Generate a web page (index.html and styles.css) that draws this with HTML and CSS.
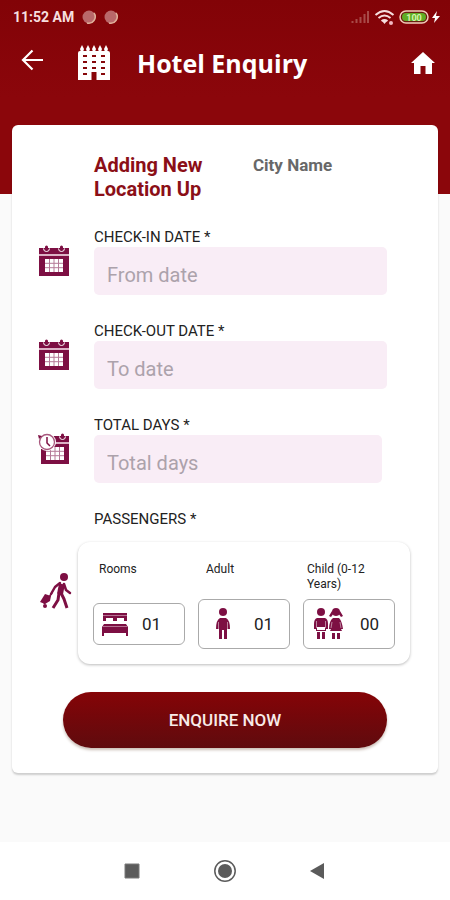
FILE: index.html
```html
<!DOCTYPE html>
<html lang="en">
<head>
<meta charset="utf-8">
<meta name="viewport" content="width=device-width, initial-scale=1">
<title>Hotel Enquiry</title>
<link rel="stylesheet" href="styles.css">
</head>
<body>
<svg class="sprite" aria-hidden="true">
  <symbol id="calendar" viewBox="0 0 32 32">
    <path fill="#7d0f43" d="M1 3h30v6H1zM1 11h30v20H1z"/>
    <path fill="#dcb3c6" d="M1 9h30v2H1z"/>
    <path fill="none" stroke="#fff" stroke-width="1" d="M5.500 3.500a3 3 0 0 0 6 0M20.500 3.500a3 3 0 0 0 6 0"/>
    <path fill="#7d0f43" d="M7 2a1.500 1.500 0 0 1 3 0v2a1.500 1.500 0 0 1-3 0zM22 2a1.500 1.500 0 0 1 3 0v2a1.500 1.500 0 0 1-3 0z"/>
    <path fill="#fff" d="M7 14h18v13H7z"/>
    <path fill="none" stroke="#b57a98" stroke-width="1" d="M11.500 14v13M16 14v13M20.500 14v13M7 18.300h18M7 22.700h18"/>
  </symbol>
</svg>

<header class="header">
  <div class="status">
    <span class="time">11:52 AM</span>
    <svg class="dots" viewBox="0 0 38 16" aria-hidden="true">
      <circle cx="8" cy="8" r="6.500" fill="#b9686a"/><path d="M13 4a6.500 6.500 0 0 1-7 10" fill="none" stroke="#e0b09a" stroke-width="1.500"/>
      <circle cx="30" cy="8" r="6.500" fill="#b9686a"/><path d="M35 4a6.500 6.500 0 0 1-7 10" fill="none" stroke="#e0b09a" stroke-width="1.500"/>
    </svg>
    <svg class="signals" viewBox="0 0 92 18" aria-hidden="true">
      <path stroke="#a84a48" stroke-width="2" d="M2.500 15v-2M6.500 15v-4M10.500 15V9M14.500 15V6M18 15V3"/>
      <g fill="none" stroke="#f6dede" stroke-width="2"><path d="M25.500 7q9-8 18 0M28.500 10q6-5 12 0M31.500 13q3-2 6 0"/></g>
      <path fill="#f6dede" d="m32 13 2.500 3 2.500-3z"/><circle cx="41" cy="15" r="2" fill="#f2b9c2"/>
      <rect x="50" y="3" width="28" height="12" rx="6" fill="#6a1e10" stroke="#f3cdbb" stroke-width="1.500"/>
      <rect x="52" y="5" width="24" height="8" rx="4" fill="#5fae25"/>
      <text x="64" y="12.500" text-anchor="middle" class="charge">100</text>
      <path fill="#fff" d="m87 3-5 7h3l-1 5 6-7h-4z"/>
    </svg>
  </div>
  <div class="appbar">
    <button class="icon-button back" type="button" aria-label="Back">
      <svg viewBox="0 0 24 24"><path fill="none" stroke="#fff" stroke-width="2.200" d="M23 12H3M12.500 2.500 3 12l9.500 9.500"/></svg>
    </button>
    <svg class="hotel" viewBox="0 0 34 36" aria-hidden="true">
      <path fill="#fff" d="M1 8q0-2 2-2h28q2 0 2 2v27H19.500v-8h-5v8H1z"/>
      <path fill="#fff" d="m5 0 2 4-1 3H4L3 4zM11 0l2 4-1 3h-2L9 4zM17 0l2 4-1 3h-2l-1-3zM23 0l2 4-1 3h-2l-1-3zM29 0l2 4-1 3h-2l-1-3z"/>
      <path fill="#87070a" d="M6 10h4v2H6zM15 10h4v2h-4zM24 10h4v2h-4zM6 16h4v2H6zM15 16h4v2h-4zM24 16h4v2h-4zM6 22h4v2H6zM15 22h4v2h-4zM24 22h4v2h-4zM6 28h4v2H6zM24 28h4v2h-4z"/>
    </svg>
    <h1 class="title">Hotel Enquiry</h1>
    <a class="home" href="#" aria-label="Home">
      <svg viewBox="0 0 24 22"><path fill="#fff" d="M12 0 24 11h-3v11h-6.500v-8h-5v8H3V11H0z"/></svg>
    </a>
  </div>
</header>

<main class="main">
  <form class="card">
    <div class="places">
      <h2 class="location">Adding New Location Up</h2>
      <span class="city">City Name</span>
    </div>

    <div class="row">
      <svg class="row-icon" aria-hidden="true"><use href="#calendar"/></svg>
      <div class="field">
        <label for="checkin">CHECK-IN DATE *</label>
        <input id="checkin" type="text" placeholder="From date">
      </div>
    </div>

    <div class="row">
      <svg class="row-icon" aria-hidden="true"><use href="#calendar"/></svg>
      <div class="field">
        <label for="checkout">CHECK-OUT DATE *</label>
        <input id="checkout" type="text" placeholder="To date">
      </div>
    </div>

    <div class="row">
      <svg class="row-icon" viewBox="0 0 32 32" aria-hidden="true">
        <path fill="#7d0f43" d="M3 3h28v6H3zM3 11h28v20H3z"/>
        <path fill="#dcb3c6" d="M3 9h28v2H3z"/>
        <path fill="none" stroke="#fff" d="M21.500 3.500a3 3 0 0 0 6 0"/>
        <path fill="#7d0f43" d="M23 2a1.500 1.500 0 0 1 3 0v2a1.500 1.500 0 0 1-3 0z"/>
        <path fill="#fff" d="M8 14h18v13H8z"/>
        <path fill="none" stroke="#b57a98" d="M12.500 14v13M17 14v13M21.500 14v13M8 18.300h18M8 22.700h18"/>
        <circle cx="9" cy="9" r="9" fill="#fff"/>
        <circle cx="9" cy="9" r="7.500" fill="#fff" stroke="#a8577d" stroke-width="1.300"/>
        <path fill="none" stroke="#7d0f43" stroke-width="1.500" d="M9 4v6l3 3"/>
        <path fill="#7d0f43" d="M0 2l4 1-3 3z"/>
      </svg>
      <div class="field field-days">
        <label for="days">TOTAL DAYS *</label>
        <input id="days" type="text" placeholder="Total days">
      </div>
    </div>

    <div class="row">
      <svg class="walker" viewBox="0 0 32 36" aria-hidden="true">
        <circle cx="24" cy="4" r="4" fill="#7d0f43"/>
        <g fill="none" stroke="#7d0f43" stroke-linejoin="round">
          <path stroke-width="6" d="m22 11-2 10"/>
          <path stroke-width="2.500" stroke-linecap="round" d="m20 10-5 4-4 7M24 11l2 6 4 3"/>
          <path stroke-width="3" d="m19 20-1 7-5 8M21 20l3 6 3 9"/>
          <path stroke-width="1.500" d="M12 20 4 31"/>
        </g>
        <path fill="#7d0f43" d="m5 21 6 2-1 5-5 3-5-2z"/>
        <circle cx="5" cy="33" r="2" fill="#7d0f43"/>
      </svg>
      <div class="field">
        <span class="group-label" id="passengers">PASSENGERS *</span>
        <div class="passengers" role="group" aria-labelledby="passengers">
          <div class="counter">
            <label for="rooms">Rooms</label>
            <div class="count-box count-rooms">
              <svg class="bed" viewBox="0 0 26 24" aria-hidden="true">
                <path fill="#7d0f43" d="M1 1h24v8h-3V6h-7v3h-4V6H4v3H1zM2 12h22l2 3v9h-2v-3H2v3H0v-9z"/>
                <path fill="none" stroke="#c48aa7" stroke-width=".8" d="M1 14.500h24M1 3.500h24"/>
              </svg>
              <input id="rooms" type="text" inputmode="numeric" value="01">
            </div>
          </div>
          <div class="counter">
            <label for="adults">Adult</label>
            <div class="count-box">
              <svg class="adult" viewBox="0 0 14 32" aria-hidden="true">
                <g fill="#7d0f43"><circle cx="7" cy="4" r="4"/><path d="M4 10h6q4 2 4 11h-3v10H8v-9H6v9H3V21H0Q0 12 4 10z"/></g>
                <path stroke="#fff" stroke-width=".5" d="M2.500 14v7M11.500 14v7"/>
              </svg>
              <input id="adults" type="text" inputmode="numeric" value="01">
            </div>
          </div>
          <div class="counter">
            <label for="children">Child (0-12 Years)</label>
            <div class="count-box">
              <svg class="kids" viewBox="0 0 30 32" aria-hidden="true">
                <g fill="#7d0f43"><circle cx="7" cy="4" r="4"/><path d="M3 10h8q3 1 3 6v5h-2v2H2v-2H0v-5q0-5 3-6zM3 24h3v7H3zM8 24h3v7H8z"/><circle cx="22" cy="4" r="4"/><path d="m18 3-3 5 2 1 3-4zM26 3l3 5-2 1-3-4zM19 10h6q3 3 4 11h-2l1 2H16l1-2h-2q0-8 4-11zM18 25h3v6h-3zM23 25h3v6h-3z"/></g>
                <path fill="#fff" d="M3 19h8v3H3z"/>
                <path fill="none" stroke="#fff" stroke-width=".5" d="M2.500 13v7M11.500 13v7M18 14l-1 6M26 14l1 6"/>
              </svg>
              <input id="children" type="text" inputmode="numeric" value="00">
            </div>
          </div>
        </div>
      </div>
    </div>

    <button class="submit" type="button">ENQUIRE NOW</button>
  </form>
</main>

<nav class="navbar" aria-label="System">
  <button class="icon-button" type="button" aria-label="Recent apps"><svg viewBox="0 0 24 24"><path fill="#5b5b5b" stroke="#7b7b7b" d="M5 5h14v14H5z"/></svg></button>
  <button class="icon-button" type="button" aria-label="Home screen"><svg viewBox="0 0 24 24"><circle cx="12" cy="12" r="10.200" fill="none" stroke="#5b5b5b" stroke-width="1.500"/><circle cx="12" cy="12" r="7" fill="#5b5b5b"/></svg></button>
  <button class="icon-button" type="button" aria-label="Go back"><svg viewBox="0 0 24 24"><path fill="#5b5b5b" d="M4 12 18 4v16z"/></svg></button>
</nav>
</body>
</html>
```
FILE: styles.css
```css
* {
  box-sizing: border-box;
}

body {
  margin: 0;
  min-height: 100vh;
  display: flex;
  flex-direction: column;
  background: #fafafa;
  color: #222;
  font-family: Roboto, "Liberation Sans", sans-serif;
}

.sprite {
  position: absolute;
  width: 0;
  height: 0;
}

svg {
  display: block;
  flex: none;
}

input,
button {
  font: inherit;
}

.header {
  padding-bottom: 102px;
  background: linear-gradient(#820307, #8b060b 50%);
  color: #fff;
}

.status {
  display: flex;
  align-items: center;
  height: 34px;
  padding: 0 8px 0 13px;
}

.time {
  font-size: 14px;
  font-weight: 700;
  color: #f6dfdf;
}

.dots {
  width: 38px;
  height: 16px;
  margin-left: 7px;
}

.signals {
  width: 92px;
  height: 18px;
  margin-left: auto;
}

.charge {
  font-size: 9px;
  font-weight: 700;
  fill: #d6f5ae;
}

.appbar {
  display: flex;
  align-items: center;
  height: 58px;
  padding: 0 15px 0 20px;
}

.icon-button {
  display: block;
  padding: 0;
  border: 0;
  background: none;
}

.icon-button svg {
  width: 24px;
  height: 24px;
}

.back {
  padding-bottom: 6px;
}

.hotel {
  width: 34px;
  height: 36px;
  margin-left: 33px;
}

.title {
  margin: 0 0 0 26px;
  font-family: "Open Sans", "Noto Sans", sans-serif;
  font-size: 25px;
  font-weight: 700;
  line-height: 32px;
}

.home {
  margin-left: auto;
}

.home svg {
  width: 24px;
  height: 22px;
}

.main {
  flex: 1;
  margin-top: -69px;
  padding: 0 12px 24px;
}

.card {
  padding: 28px 51px 25px 26px;
  border-radius: 6px;
  background: #fff;
  box-shadow: 0 2px 2px rgb(0 0 0 / 18%);
}

.places {
  display: grid;
  grid-template-columns: 159px 1fr;
  padding-left: 56px;
  margin-bottom: 26px;
}

.location {
  margin: 0;
  padding-right: 32px;
  font-size: 20px;
  font-weight: 700;
  line-height: 24px;
  color: #8b0f17;
}

.city {
  font-size: 17px;
  font-weight: 700;
  line-height: 24px;
  color: #686868;
}

.row {
  display: grid;
  grid-template-columns: 56px minmax(0, 1fr);
  align-items: center;
  margin-bottom: 26px;
}

.row-icon {
  width: 32px;
  height: 32px;
}

.field label,
.group-label {
  display: block;
  font-size: 15px;
  line-height: 20px;
}

.field > input {
  display: block;
  width: 100%;
  height: 48px;
  padding: 8px 13px 0;
  border: 0;
  border-radius: 5px;
  background: #f9edf6;
  font-size: 20px;
  color: #222;
}

.field > input::placeholder {
  color: #aca2ab;
  opacity: 1;
}

.field-days {
  padding-right: 5px;
}

.walker {
  width: 32px;
  height: 36px;
  margin: 8px 0 0 2px;
}

.passengers {
  display: grid;
  grid-template-columns: repeat(3, minmax(0, 1fr));
  gap: 13px;
  margin: 13px -23px 0 -16px;
  padding: 20px 15px 15px;
  border-radius: 12px;
  background: #fff;
  box-shadow: 0 1px 3px #bbb;
}

.field .counter label {
  height: 37px;
  padding: 0 6px 0 8px;
  font-size: 12px;
  line-height: 15px;
}

.field .counter:first-child label {
  padding-left: 6px;
}

.field .counter:last-child label {
  padding: 0 4px;
}

.count-box {
  display: flex;
  align-items: center;
  gap: 24px;
  height: 50px;
  padding: 0 8px 0 17px;
  border: 1px solid #aaa;
  border-radius: 6px;
}

.counter:last-child .count-box {
  gap: 16px;
  padding-left: 10px;
}

.count-box.count-rooms {
  gap: 14px;
  height: 42px;
  margin: 4px 0;
  padding-left: 8px;
}

.count-box input {
  flex: 1;
  width: 100%;
  min-width: 0;
  padding: 0;
  border: 0;
  background: none;
  font-size: 17px;
  color: #222;
}

.bed {
  width: 26px;
  height: 24px;
}

.adult {
  width: 14px;
  height: 32px;
}

.kids {
  width: 30px;
  height: 32px;
}

.submit {
  display: block;
  width: calc(100% - 25px);
  height: 56px;
  margin: 28px 0 0 25px;
  border: 0;
  border-radius: 28px;
  background: linear-gradient(#850407, #5f0b0e);
  box-shadow: 0 2px 3px #c9bdb5;
  color: #f8ebe8;
  font-size: 17px;
  font-weight: 500;
}

.navbar {
  display: flex;
  justify-content: center;
  align-items: center;
  gap: 69px;
  height: 58px;
  background: #fff;
}
```
